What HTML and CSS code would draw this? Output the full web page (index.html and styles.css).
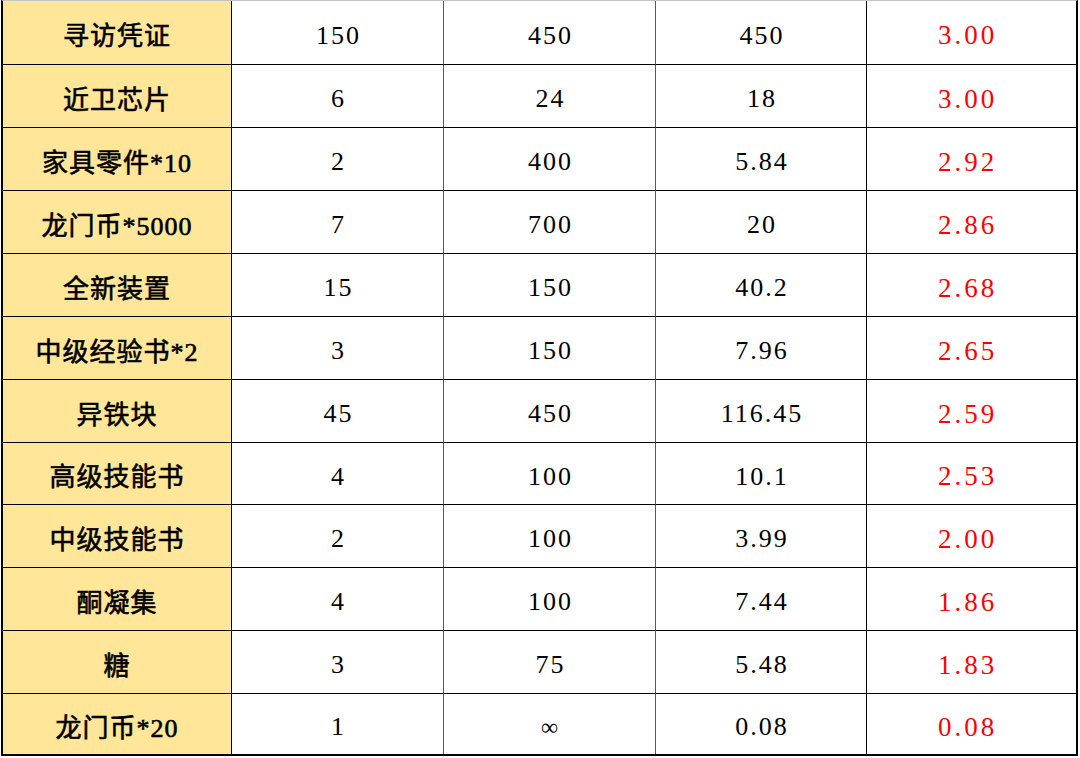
FILE: index.html
```html
<!DOCTYPE html>
<html lang="zh">
<head>
<meta charset="utf-8">
<title>兑换比率</title>
<link rel="stylesheet" href="styles.css">
</head>
<body>
<div class="sheet">
  <div class="cell name">寻访凭证</div><div class="cell val">150</div><div class="cell val col3">450</div><div class="cell val">450</div><div class="cell ratio">3.00</div>
  <div class="cell name">近卫芯片</div><div class="cell val">6</div><div class="cell val col3">24</div><div class="cell val">18</div><div class="cell ratio">3.00</div>
  <div class="cell name">家具零件*10</div><div class="cell val">2</div><div class="cell val col3">400</div><div class="cell val">5.84</div><div class="cell ratio">2.92</div>
  <div class="cell name">龙门币*5000</div><div class="cell val">7</div><div class="cell val col3">700</div><div class="cell val">20</div><div class="cell ratio">2.86</div>
  <div class="cell name">全新装置</div><div class="cell val">15</div><div class="cell val col3">150</div><div class="cell val">40.2</div><div class="cell ratio">2.68</div>
  <div class="cell name">中级经验书*2</div><div class="cell val">3</div><div class="cell val col3">150</div><div class="cell val">7.96</div><div class="cell ratio">2.65</div>
  <div class="cell name">异铁块</div><div class="cell val">45</div><div class="cell val col3">450</div><div class="cell val">116.45</div><div class="cell ratio">2.59</div>
  <div class="cell name">高级技能书</div><div class="cell val">4</div><div class="cell val col3">100</div><div class="cell val">10.1</div><div class="cell ratio">2.53</div>
  <div class="cell name">中级技能书</div><div class="cell val">2</div><div class="cell val col3">100</div><div class="cell val">3.99</div><div class="cell ratio">2.00</div>
  <div class="cell name">酮凝集</div><div class="cell val">4</div><div class="cell val col3">100</div><div class="cell val">7.44</div><div class="cell ratio">1.86</div>
  <div class="cell name">糖</div><div class="cell val">3</div><div class="cell val col3">75</div><div class="cell val">5.48</div><div class="cell ratio">1.83</div>
  <div class="cell name">龙门币*20</div><div class="cell val">1</div><div class="cell val col3 inf">∞</div><div class="cell val">0.08</div><div class="cell ratio">0.08</div>
</div>
</body>
</html>
```
FILE: styles.css
```css
html, body {
  margin: 0;
  padding: 0;
  background: #ffffff;
}

.sheet {
  margin-left: 1px;
  width: 1073px;
  display: grid;
  grid-template-columns: 229px 212px 212px 211px 209px;
  grid-template-rows: 64px repeat(6, 63px) 62px repeat(3, 63px) 60px;
  border-top: 1px solid #c4c4c4;
  border-left: 2px solid #000;
  border-right: 2px solid #000;
  border-bottom: 2px solid #000;
  font-family: "Liberation Serif", "Noto Sans CJK SC", serif;
  font-size: 25px;
  color: #000;
}

.cell {
  box-sizing: border-box;
  display: flex;
  align-items: center;
  justify-content: center;
  padding-top: 6px;
  border-right: 1px solid #000;
  border-bottom: 1px solid #000;
  letter-spacing: 1px;
}

.cell:nth-child(5n) {
  border-right: none;
}

.cell:nth-last-child(-n+5) {
  border-bottom: none;
}

.name {
  background: #ffe699;
  font-weight: normal;
  font-size: 26px;
  letter-spacing: 1px;
  padding-top: 2px;
  -webkit-text-stroke: 0.6px #000;
}

.val {
  font-size: 26px;
  letter-spacing: 2px;
  padding-left: 2px;
  border-right-color: #5a5a5a;
}

.col3 + .val {
  border-right-color: #000;
}

.ratio {
  color: #ff0000;
  font-size: 27px;
  letter-spacing: 3px;
  padding-right: 8px;
}

.inf {
  font-size: 24px;
}
```
